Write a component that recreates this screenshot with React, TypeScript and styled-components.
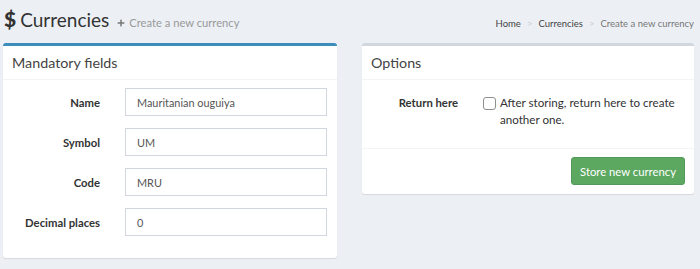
import React from "react";
import styled, { createGlobalStyle } from "styled-components";
import { FaPlus } from "react-icons/fa";

const Global = createGlobalStyle`
  html, body { margin: 0; padding: 0; }
  body {
    background: #ecf0f5;
    font-family: Lato, "Open Sans", sans-serif;
    color: #333;
    width: 700px;
    height: 269px;
    overflow: hidden;
  }
  * { box-sizing: border-box; }
`;

const Page = styled.div`
  display: flex;
  flex-direction: column;
`;

const Header = styled.div`
  display: flex;
  align-items: center;
  justify-content: space-between;
  height: 43px;
  padding: 0 6px 1px 4px;
`;

const Title = styled.h1`
  display: flex;
  align-items: baseline;
  margin: 0;
  font-size: 19px;
  font-weight: 400;
  color: #333;
  line-height: 24px;
`;

const Dollar = styled.span`
  font-weight: 900;
  font-size: 21px;
  margin-right: 4px;
`;

const Sub = styled.small`
  display: inline-flex;
  align-items: center;
  gap: 4px;
  margin-left: 8px;
  font-size: 11.2px;
  color: #999;
  font-weight: 400;
  svg { color: #777; width: 8px; height: 8px; }
`;

const Crumbs = styled.ol`
  display: flex;
  margin: 5px 0 0;
  padding: 0;
  list-style: none;
  font-size: 9.5px;
  color: #444;
`;

const Crumb = styled.li<{ $active?: boolean }>`
  color: ${(p) => (p.$active ? "#777" : "#444")};
  &:not(:first-child)::before {
    content: ">";
    color: #ccc;
    padding: 0 6px;
  }
`;

const Columns = styled.div`
  display: grid;
  grid-template-columns: 334px 332px;
  column-gap: 25px;
  align-items: start;
  padding-left: 3px;
`;

const Box = styled.div<{ $accent: string }>`
  background: #fff;
  border-top: 3px solid ${(p) => p.$accent};
  border-radius: 3px;
  box-shadow: 0 1px 1px rgba(0, 0, 0, 0.1);
`;

const BoxHeader = styled.div`
  height: 34px;
  padding: 0 9px;
  display: flex;
  align-items: center;
  border-bottom: 1px solid #f4f4f4;
  font-size: 14.3px;
  color: #444;
`;

const FormBody = styled.div`
  padding: 8px 10px 22px;
  display: flex;
  flex-direction: column;
  gap: 12px;
`;

const Row = styled.div`
  display: grid;
  grid-template-columns: 87px 1fr;
  column-gap: 25px;
  align-items: center;
`;

const Label = styled.label`
  text-align: right;
  font-weight: 700;
  font-size: 11.3px;
  color: #333;
`;

const Input = styled.input`
  height: 28px;
  width: 100%;
  border: 1px solid #d2d6de;
  border-radius: 0;
  padding: 0 11px;
  font-family: inherit;
  font-size: 10.9px;
  color: #555;
  outline: none;
`;

const OptionsBody = styled.div`
  padding: 14px 10px 20px;
`;

const OptionRow = styled.div`
  display: grid;
  grid-template-columns: 86px 1fr;
  column-gap: 25px;
  align-items: start;
`;

const OptLabel = styled(Label)`
  line-height: 17px;
`;

const CheckLine = styled.div`
  display: flex;
  align-items: flex-start;
  gap: 4px;
  font-size: 11.6px;
  line-height: 17px;
  color: #333;
`;

const Check = styled.span`
  flex: none;
  width: 13px;
  height: 13px;
  margin-top: 3px;
  border: 1px solid #8f8f8f;
  border-radius: 3px;
  background: #fff;
`;

const Footer = styled.div`
  border-top: 1px solid #f4f4f4;
  padding: 8px 9px 9px;
  display: flex;
  justify-content: flex-end;
`;

const Button = styled.button`
  height: 28px;
  padding: 0 8px;
  background: #5ca860;
  border: 1px solid #52985a;
  border-radius: 3px;
  color: #fff;
  font-family: inherit;
  font-size: 11.3px;
`;

const fields = [
  { label: "Name", value: "Mauritanian ouguiya" },
  { label: "Symbol", value: "UM" },
  { label: "Code", value: "MRU" },
  { label: "Decimal places", value: "0" },
];

export default function App() {
  return (
    <Page>
      <Global />
      <Header>
        <Title>
          <Dollar>$</Dollar>Currencies
          <Sub>
            <FaPlus />
            Create a new currency
          </Sub>
        </Title>
        <Crumbs>
          <Crumb>Home</Crumb>
          <Crumb>Currencies</Crumb>
          <Crumb $active>Create a new currency</Crumb>
        </Crumbs>
      </Header>
      <Columns>
        <Box $accent="#3c8dbc">
          <BoxHeader>Mandatory fields</BoxHeader>
          <FormBody>
            {fields.map((f) => (
              <Row key={f.label}>
                <Label>{f.label}</Label>
                <Input defaultValue={f.value} />
              </Row>
            ))}
          </FormBody>
        </Box>
        <Box $accent="#d2d6de">
          <BoxHeader>Options</BoxHeader>
          <OptionsBody>
            <OptionRow>
              <OptLabel>Return here</OptLabel>
              <CheckLine>
                <Check />
                <span>
                  After storing, return here to create
                  <br />
                  another one.
                </span>
              </CheckLine>
            </OptionRow>
          </OptionsBody>
          <Footer>
            <Button>Store new currency</Button>
          </Footer>
        </Box>
      </Columns>
    </Page>
  );
}
